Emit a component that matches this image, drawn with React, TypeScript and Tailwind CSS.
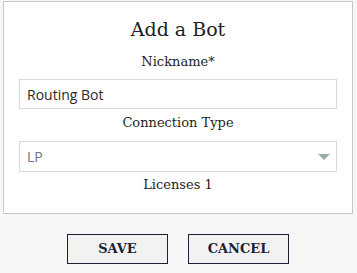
import { useState } from 'react';

const serif = { fontFamily: '"DejaVu Serif", "Liberation Serif", serif' };

export default function App() {
  const [nickname, setNickname] = useState('Routing Bot');
  const [connection, setConnection] = useState('LP');

  return (
    <div className="w-[357px] h-[273px] bg-[#f7f7f7] pt-px pl-[3px]">
      {/* Form card */}
      <div
        className="w-[350px] h-[213px] bg-white border border-[#c8c8c8] flex flex-col items-center text-[#1e1e1e]"
        style={serif}
      >
        <h2 className="mt-[15px] h-[24px] leading-[24px] text-[19px]">Add a Bot</h2>
        <label className="mt-[11px] h-[20px] leading-[20px] text-[13px]">Nickname*</label>
        <input
          value={nickname}
          onChange={(e) => setNickname(e.target.value)}
          className="mt-[7px] w-[318px] h-[30px] border border-[#d9d9e0] px-[7px] text-[14px] text-[#2a2a2a] outline-none"
          style={{ fontFamily: '"Open Sans", sans-serif' }}
        />
        <label className="mt-[4px] h-[20px] leading-[20px] text-[13px]">Connection Type</label>
        <div className="mt-[8px] w-[318px] h-[31px] border border-[#d9d9e0] flex items-center justify-between pl-[7px] pr-[6px]">
          <select
            value={connection}
            onChange={(e) => setConnection(e.target.value)}
            className="appearance-none bg-transparent text-[14px] text-[#6e7480] outline-none w-full"
            style={{ fontFamily: '"Open Sans", sans-serif' }}
          >
            <option value="LP">LP</option>
          </select>
          <svg width="12" height="6" viewBox="0 0 12 6" className="shrink-0">
            <path d="M0 0 H12 L6 6 Z" fill="#9aabab" />
          </svg>
        </div>
        <div className="mt-[3px] h-[20px] leading-[20px] text-[13px]">Licenses 1</div>
      </div>

      {/* Actions */}
      <div className="mt-[20px] flex justify-center gap-[20px] pr-[4px]" style={serif}>
        <button className="w-[101px] h-[30px] bg-[#f2f2f2] border border-[#1a2035] text-[13px] font-bold text-[#1c2237]">
          SAVE
        </button>
        <button className="w-[101px] h-[30px] bg-[#f2f2f2] border border-[#1a2035] text-[13px] font-bold text-[#1c2237]">
          CANCEL
        </button>
      </div>
    </div>
  );
}
